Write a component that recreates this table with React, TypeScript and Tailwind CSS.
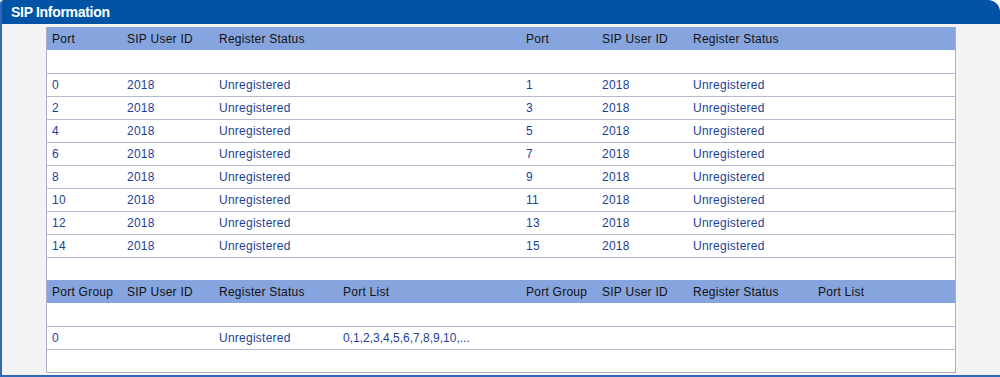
import React from "react";

const ports = [0, 2, 4, 6, 8, 10, 12, 14];

const Cell = ({ children, w }: { children?: React.ReactNode; w: string }) => (
  <div className={`${w} pl-[5px] shrink-0 tracking-[0.25px]`}>{children}</div>
);

const App = () => {
  return (
    <div className="w-[1000px] h-[377px] bg-white font-['Liberation_Sans',Arial,sans-serif] text-[12px] overflow-hidden">
      <div className="h-[377px] flex flex-col bg-[#f3f3f3] border-l-2 border-b-2 border-[#2f68b8] rounded-tr-[12px] rounded-tl-[4px] overflow-hidden">
        <div className="h-[24px] shrink-0 bg-[#0053a5] text-white font-bold text-[14px] tracking-[-0.3px] leading-[24px] pl-[9px]">
          SIP Information
        </div>
        <div className="pl-[44px] pt-[3px]">
          <div className="w-[910px] border-x border-b border-[#a9b0c8] bg-white text-[#1d3f94]">
            <div className="h-[23px] flex items-center bg-[#86a5de] text-[#111]">
              <Cell w="w-[75px]">Port</Cell>
              <Cell w="w-[92px]">SIP User ID</Cell>
              <Cell w="w-[124px]">Register Status</Cell>
              <Cell w="w-[183px]"></Cell>
              <Cell w="w-[76px]">Port</Cell>
              <Cell w="w-[91px]">SIP User ID</Cell>
              <Cell w="w-[125px]">Register Status</Cell>
              <Cell w="w-[142px]"></Cell>
            </div>
            <div className="h-[23px]" />
            {ports.map((p) => (
              <div key={p} className="h-[23px] flex items-center border-t border-[#b4bad0]">
                <Cell w="w-[75px]">{p}</Cell>
                <Cell w="w-[92px]">2018</Cell>
                <Cell w="w-[124px]">Unregistered</Cell>
                <Cell w="w-[183px]"></Cell>
                <Cell w="w-[76px]">{p + 1}</Cell>
                <Cell w="w-[91px]">2018</Cell>
                <Cell w="w-[125px]">Unregistered</Cell>
                <Cell w="w-[142px]"></Cell>
              </div>
            ))}
            <div className="h-[23px] border-t border-[#b4bad0]" />
            <div className="h-[23px] flex items-center bg-[#86a5de] text-[#111]">
              <Cell w="w-[75px]">Port Group</Cell>
              <Cell w="w-[92px]">SIP User ID</Cell>
              <Cell w="w-[124px]">Register Status</Cell>
              <Cell w="w-[183px]">Port List</Cell>
              <Cell w="w-[76px]">Port Group</Cell>
              <Cell w="w-[91px]">SIP User ID</Cell>
              <Cell w="w-[125px]">Register Status</Cell>
              <Cell w="w-[142px]">Port List</Cell>
            </div>
            <div className="h-[23px]" />
            <div className="h-[23px] flex items-center border-t border-[#b4bad0]">
              <Cell w="w-[75px]">0</Cell>
              <Cell w="w-[92px]"></Cell>
              <Cell w="w-[124px]">Unregistered</Cell>
              <Cell w="w-[183px]">
                <span className="tracking-normal">0,1,2,3,4,5,6,7,8,9,10,...</span>
              </Cell>
              <Cell w="w-[76px]"></Cell>
              <Cell w="w-[91px]"></Cell>
              <Cell w="w-[125px]"></Cell>
              <Cell w="w-[142px]"></Cell>
            </div>
            <div className="h-[23px] border-t border-[#b4bad0]" />
          </div>
        </div>
      </div>
    </div>
  );
};

export default App;
